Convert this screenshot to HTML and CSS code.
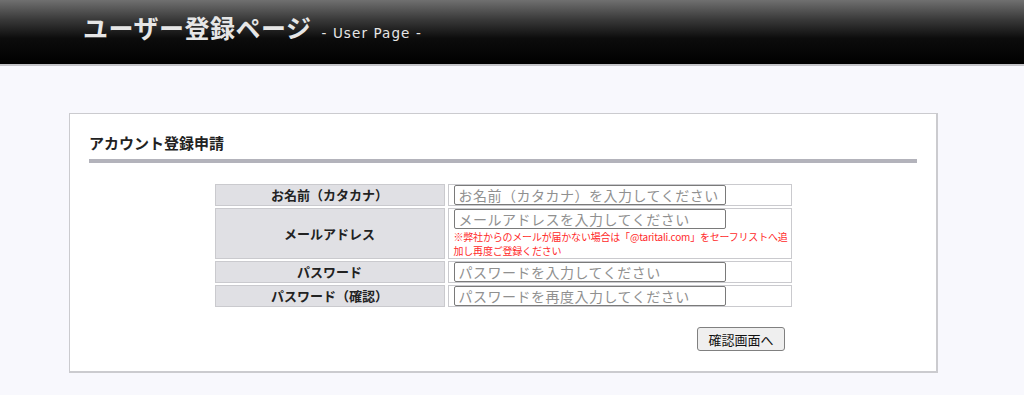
FILE: index.html
```html
<!DOCTYPE html>
<html lang="ja">
<head>
    <meta charset="UTF-8">
    <meta name="viewport" content="width=device-width, initial-scale=1.0">
    <title>ユーザー登録ページ</title>
    <link rel="stylesheet" href="styles.css">
</head>
<body>
    <header class="header">
        <h1 class="site-title">ユーザー登録ページ<span class="sub">- User Page -</span></h1>
    </header>

    <main class="panel">
        <h2 class="panel-title">アカウント登録申請</h2>

        <form class="signup">
            <table class="form-table">
                <tr>
                    <th>お名前（カタカナ）</th>
                    <td><input type="text" placeholder="お名前（カタカナ）を入力してください"></td>
                </tr>
                <tr>
                    <th>メールアドレス</th>
                    <td>
                        <input type="email" placeholder="メールアドレスを入力してください">
                        <p class="note">※弊社からのメールが届かない場合は「@taritali.com」をセーフリストへ追加し再度ご登録ください</p>
                    </td>
                </tr>
                <tr>
                    <th>パスワード</th>
                    <td><input type="password" placeholder="パスワードを入力してください"></td>
                </tr>
                <tr>
                    <th>パスワード（確認）</th>
                    <td><input type="password" placeholder="パスワードを再度入力してください"></td>
                </tr>
            </table>

            <div class="actions">
                <button type="submit" class="btn">確認画面へ</button>
            </div>
        </form>
    </main>
</body>
</html>
```

FILE: styles.css
```css
* {
    box-sizing: border-box;
    margin: 0;
    padding: 0;
}

body {
    background-color: #f8f8fd;
    font-family: 'Noto Sans CJK JP', 'Noto Sans', sans-serif;
    color: #222;
}

.header {
    height: 66px;
    background: linear-gradient(to bottom, #707070 0%, #3a3a3a 30%, #0c0c0c 60%, #000 100%);
    border-bottom: 2px solid #c4c4c8;
    padding-left: 83px;
}

.site-title {
    font-size: 25px;
    font-weight: bold;
    color: #e6e6e6;
    line-height: 1;
    padding-top: 15px;
    letter-spacing: 0.5px;
}

.site-title .sub {
    font-family: 'DejaVu Sans', sans-serif;
    font-size: 13.5px;
    font-weight: normal;
    margin-left: 10px;
    letter-spacing: 1.1px;
}

.panel {
    width: 869px;
    margin: 47px 0 0 69px;
    background-color: white;
    border: 1px solid #cbcbcf;
    border-right-width: 2px;
    border-bottom-width: 2px;
    padding: 19px 19px 20px 19px;
}

.panel-title {
    font-size: 15px;
    font-weight: bold;
    color: #222;
    line-height: 20px;
    padding-bottom: 6px;
    border-bottom: 4px solid #b3b3bb;
}

.form-table {
    margin: 19px auto 0;
    border-collapse: separate;
    border-spacing: 3px 2px;
}

.form-table th,
.form-table td {
    border: 1px solid #cacace;
    font-size: 13px;
    line-height: 16px;
}

.form-table th {
    width: 230px;
    background-color: #e0e0e4;
    font-weight: bold;
    text-align: center;
    color: #222;
}

.form-table td {
    width: 344px;
    padding: 0 0 0 5px;
    vertical-align: top;
}

.form-table input {
    display: block;
    width: 272px;
    height: 20px;
    border: 1px solid #7a7a7a;
    border-radius: 2px;
    padding: 0 4px;
    font-family: 'Noto Sans CJK JP', sans-serif;
    font-size: 14px;
    letter-spacing: 0.5px;
    color: #333;
}

.form-table input::placeholder {
    color: #909090;
}

.note {
    color: #ff2a2a;
    font-size: 10px;
    line-height: 14px;
    margin: 1px 0 0;
    letter-spacing: -0.2px;
}

.actions {
    display: flex;
    justify-content: flex-end;
    width: 577px;
    margin: 18px auto 0;
    padding-right: 7px;
}

.btn {
    font-family: 'Noto Sans CJK JP', sans-serif;
    font-size: 13px;
    color: #111;
    background-color: #efefef;
    border: 1px solid #808080;
    border-radius: 3px;
    padding: 2px 10px;
    height: 24px;
    cursor: pointer;
}
```
